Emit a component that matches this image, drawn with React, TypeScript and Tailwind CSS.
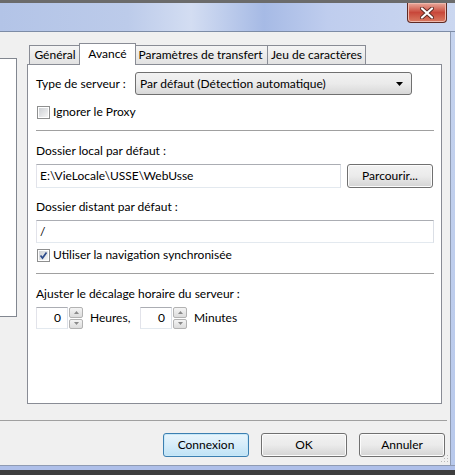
import React from "react";

function Checkbox({ checked = false }: { checked?: boolean }) {
  return (
    <span className="w-[13px] h-[13px] border border-[#8e8f8f] bg-white p-px flex shrink-0">
      <span className="flex-1 bg-gradient-to-br from-[#cdd0d4] to-[#f6f6f6] flex items-center justify-center">
        {checked && (
          <svg width="9" height="9" viewBox="0 0 9 9">
            <path d="M1.5 4.5 L3.5 7 L7.5 1.5" fill="none" stroke="#2c4a8a" strokeWidth="1.7" />
          </svg>
        )}
      </span>
    </span>
  );
}

function Separator() {
  return <div className="h-px bg-[#a0a0a0]" />;
}

function Spinner({ value }: { value: string }) {
  return (
    <div className="flex items-center gap-px">
      <div className="w-[32px] h-[22px] border border-[#abadb3] border-l-[#e2e3ea] border-r-[#dbdfe6] border-b-[#e3e9ef] bg-white flex items-center justify-end pr-[6px]">
        {value}
      </div>
      <div className="w-[14px] h-[22px] flex flex-col gap-px">
        <div className="flex-1 border border-[#b2b2b2] rounded-[2px] bg-gradient-to-b from-[#f4f4f4] to-[#dcdcdc] flex items-center justify-center">
          <svg width="5" height="3" viewBox="0 0 5 3">
            <polygon points="0,3 2.5,0 5,3" fill="#8a8a8a" />
          </svg>
        </div>
        <div className="flex-1 border border-[#b2b2b2] rounded-[2px] bg-gradient-to-b from-[#f4f4f4] to-[#dcdcdc] flex items-center justify-center">
          <svg width="5" height="3" viewBox="0 0 5 3">
            <polygon points="0,0 5,0 2.5,3" fill="#8a8a8a" />
          </svg>
        </div>
      </div>
    </div>
  );
}

function Button({ label, primary = false }: { label: string; primary?: boolean }) {
  return (
    <div
      className={
        primary
          ? "w-[86px] h-[24px] rounded-[3px] border border-[#3c7fb1] bg-gradient-to-b from-[#e9f5fc] via-[#d6edfa] to-[#bfe2f5] shadow-[inset_0_0_0_1px_#c8e8f8] flex items-center justify-center"
          : "w-[86px] h-[24px] rounded-[3px] border border-[#707070] bg-gradient-to-b from-[#f2f2f2] via-[#ebebeb] to-[#d4d4d4] shadow-[inset_0_0_0_1px_#fcfcfc] flex items-center justify-center"
      }
    >
      {label}
    </div>
  );
}

export default function App() {
  return (
    <div className="w-[455px] h-[475px] overflow-hidden flex flex-col bg-[#f0f0f0] text-[12px] text-black font-['Lato',sans-serif] leading-none whitespace-nowrap">
      {/* title bar */}
      <div className="h-[32px] shrink-0 border-t-[3px] border-t-[#6b6b6b] border-b border-b-[#7d8ca6] bg-[linear-gradient(90deg,#b3c4e7_0%,#bccbea_28%,#d3ddf2_42%,#a6bae5_58%,#bfcdee_72%,#cbd7f0_100%)] flex justify-end pr-[8px]">
        <div className="w-[40px] h-[20px] rounded-b-[4px] border border-t-0 border-[#5e2a24] bg-gradient-to-b from-[#e9a99c] via-[#c8473a] to-[#d97a62] shadow-[inset_0_0_0_1px_#efb9ad] flex items-center justify-center">
          <svg width="14" height="12" viewBox="0 0 14 12">
            <path d="M2 1.5 L12 10.5 M12 1.5 L2 10.5" stroke="#5a2a24" strokeWidth="4" strokeLinecap="round" />
            <path d="M2 1.5 L12 10.5 M12 1.5 L2 10.5" stroke="#ffffff" strokeWidth="2.2" strokeLinecap="round" />
          </svg>
        </div>
      </div>

      <div className="flex flex-1 min-h-0">
        {/* client area */}
        <div className="w-[450px] flex flex-col relative">
          <div className="h-[388px] flex">
            {/* left list */}
            <div className="w-[17px] h-[259px] mt-[26px] bg-white border border-l-0 border-[#828790]" />

            {/* tab control */}
            <div className="ml-[10px] mt-[11px] w-[415px] flex flex-col">
              <div className="h-[21px] flex items-end pl-[2px] relative z-10">
                <div className="w-[52px] h-[19px] border border-b-0 border-[#898c95] bg-gradient-to-b from-[#f5f5f5] to-[#e2e2e2] flex items-center justify-center">
                  Général
                </div>
                <div className="w-[57px] h-[22px] -mx-[2px] -mb-px border border-b-0 border-[#898c95] bg-white flex items-center justify-center relative z-10 pb-[2px]">
                  Avancé
                </div>
                <div className="w-[134px] h-[19px] border border-b-0 border-l-0 border-[#898c95] bg-gradient-to-b from-[#f5f5f5] to-[#e2e2e2] flex items-center justify-center">
                  Paramètres de transfert
                </div>
                <div className="w-[98px] h-[19px] border border-b-0 border-l-0 border-[#898c95] bg-gradient-to-b from-[#f5f5f5] to-[#e2e2e2] flex items-center justify-center">
                  Jeu de caractères
                </div>
              </div>

              <div className="h-[340px] border border-[#898c95] bg-white pl-[8px] pr-[7px] pt-[7px] flex flex-col">
                <div className="flex items-center h-[23px]">
                  <span className="w-[99px]">Type de serveur :</span>
                  <div className="w-[277px] h-[23px] rounded-[3px] border border-[#707070] bg-gradient-to-b from-[#f2f2f2] via-[#ebebeb] to-[#d8d8d8] flex items-center justify-between pl-[4px] pr-[8px]">
                    <span>Par défaut (Détection automatique)</span>
                    <svg width="7" height="4" viewBox="0 0 7 4">
                      <polygon points="0,0 7,0 3.5,4" fill="#000" />
                    </svg>
                  </div>
                </div>

                <div className="mt-[9px] h-[16px] flex items-center gap-[3px] pl-px">
                  <Checkbox />
                  <span>Ignorer le Proxy</span>
                </div>

                <div className="mt-[10px]">
                  <Separator />
                </div>

                <div className="mt-[12px] h-[16px] flex items-center">Dossier local par défaut :</div>

                <div className="mt-[5px] flex gap-[6px]">
                  <div className="w-[305px] h-[24px] border border-[#abadb3] border-l-[#e2e3ea] border-r-[#dbdfe6] border-b-[#e3e9ef] flex items-center pl-[3px]">
                    E:\VieLocale\USSE\WebUsse
                  </div>
                  <Button label="Parcourir..." />
                </div>

                <div className="mt-[11px] h-[16px] flex items-center">Dossier distant par défaut :</div>

                <div className="mt-[5px] h-[23px] border border-[#abadb3] border-l-[#e2e3ea] border-r-[#dbdfe6] border-b-[#e3e9ef] flex items-center pl-[3px]">
                  /
                </div>

                <div className="mt-[4px] h-[16px] flex items-center gap-[3px] pl-px">
                  <Checkbox checked />
                  <span>Utiliser la navigation synchronisée</span>
                </div>

                <div className="mt-[10px]">
                  <Separator />
                </div>

                <div className="mt-[12px] h-[16px] flex items-center">Ajuster le décalage horaire du serveur :</div>

                <div className="mt-[5px] flex items-center">
                  <Spinner value="0" />
                  <span className="w-[57px] pl-[7px]">Heures,</span>
                  <Spinner value="0" />
                  <span className="pl-[7px]">Minutes</span>
                </div>
              </div>
            </div>
          </div>

          <div className="w-[447px] h-px bg-[#a0a0a0]" />
          <div className="flex justify-end gap-[12px] pr-[5px] pt-[12px]">
            <Button label="Connexion" primary />
            <Button label="OK" />
            <Button label="Annuler" />
          </div>

          {/* size grip */}
          <svg className="absolute right-[1px] bottom-[2px]" width="8" height="8" viewBox="0 0 8 8">
            <rect x="6" y="0" width="1" height="1" fill="#b8b8b8" />
            <rect x="3" y="3" width="1" height="1" fill="#b8b8b8" />
            <rect x="6" y="3" width="1" height="1" fill="#b8b8b8" />
            <rect x="0" y="6" width="1" height="1" fill="#b8b8b8" />
            <rect x="3" y="6" width="1" height="1" fill="#b8b8b8" />
            <rect x="6" y="6" width="1" height="1" fill="#b8b8b8" />
          </svg>
        </div>

        {/* right frame */}
        <div className="w-[5px] border-l border-[#8f9bb3] bg-gradient-to-b from-[#c5d3ee] to-[#b8c9ec]" />
      </div>

      {/* bottom frame */}
      <div className="h-[5px] shrink-0 border-t border-[#8f9bb3] bg-[#aebfe9]" />
      <div className="h-[5px] shrink-0 bg-[#3d3d3d]" />
    </div>
  );
}
